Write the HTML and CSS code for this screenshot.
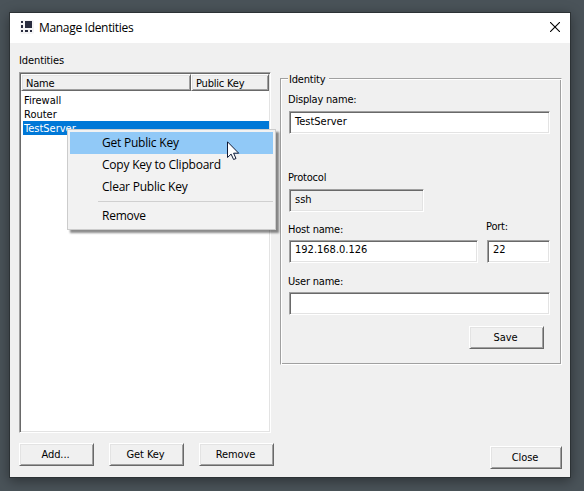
FILE: index.html
```html
<!DOCTYPE html>
<html lang="en">
<head>
<meta charset="utf-8">
<title>Manage Identities</title>
<link rel="stylesheet" href="styles.css">
</head>
<body>
<main class="dialog">
  <header class="titlebar">
    <svg class="app-icon" width="14" height="14" viewBox="0 0 14 14" aria-hidden="true">
      <rect x="0" y="0" width="14" height="14" rx="2" fill="#f4f4f5"/>
      <path fill="#292c3e" d="M5 1h7v7H5zM1 1h2v2H1zM1 5h2v3H1zM1 10h2v2H1zM5 10h3v2H5zM10 10h2v2h-2z"/>
    </svg>
    <h1>Manage Identities</h1>
    <svg class="close-icon" width="10" height="10" viewBox="0 0 10 10" aria-label="Close"><path d="M0 0L10 10M10 0L0 10" stroke="#000" stroke-width="1.1"/></svg>
  </header>
  <div class="content">
    <section class="left">
      <div class="label list-label">Identities</div>
      <div class="list sunken">
        <div class="list-head"><div class="head-cell name">Name</div><div class="head-cell key">Public Key</div></div>
        <div class="rows">
          <div class="row">Firewall</div>
          <div class="row">Router</div>
          <div class="row selected">TestServer</div>
        </div>
      </div>
      <div class="buttons">
        <button>Add...</button><button>Get Key</button><button>Remove</button>
      </div>
    </section>
    <section class="right">
      <div class="group">
        <div class="legend">Identity</div>
        <div class="label display-label">Display name:</div>
        <div class="field sunken">TestServer</div>
        <div class="label protocol-label">Protocol</div>
        <div class="field sunken readonly">ssh</div>
        <div class="pair">
          <div class="host"><div class="label">Host name:</div><div class="field sunken">192.168.0.126</div></div>
          <div class="port"><div class="label">Port:</div><div class="field sunken">22</div></div>
        </div>
        <div class="label user-label">User name:</div>
        <div class="field sunken"></div>
        <button class="save">Save</button>
      </div>
      <button class="close">Close</button>
    </section>
  </div>
</main>
<nav class="menu">
  <div class="item active">Get Public Key</div>
  <div class="item">Copy Key to Clipboard</div>
  <div class="item">Clear Public Key</div>
  <div class="separator"></div>
  <div class="item">Remove</div>
</nav>
<svg class="cursor" width="13" height="20" viewBox="0 0 13 20" aria-hidden="true"><path d="M.5.8v15.7l3.6-3.4 2.5 5.4 2.4-1-2.4-5.3h5.1z" fill="#fff" stroke="#101a35" stroke-width="1"/></svg>
</body>
</html>
```

FILE: styles.css
```css
* { box-sizing: border-box; }
body {
  margin: 0;
  width: 584px;
  height: 491px;
  padding: 12px 0 0 9px;
  overflow: hidden;
  position: relative;
  background: #4a5359;
  color: #000;
  font: 11px/16px "DejaVu Sans Condensed", "DejaVu Sans", sans-serif;
  font-stretch: condensed;
  letter-spacing: -0.2px;
  white-space: nowrap;
}
.dialog {
  width: 562px;
  height: 466px;
  border: 1px solid #2c3235;
  background: #f0f0f0;
  box-shadow: 0 3px 12px rgba(0, 0, 0, .4);
}
.titlebar {
  height: 30px;
  background: #fff;
  display: flex;
  align-items: center;
  padding: 0 10px;
}
.app-icon { margin-right: 5px; margin-top: -3px; }
h1 { margin: 0; font: 12px/18px "Open Sans", sans-serif; letter-spacing: -.32px; }
.close-icon { margin-left: auto; margin-top: -2px; }
.content { display: flex; height: 434px; }
.left { width: 270px; padding: 10px 0 0 9px; }
.label { height: 14px; margin-left: -1px; }
.list-label { margin: 0 0 5px; letter-spacing: -.1px; }
.sunken {
  border: 1px solid;
  border-color: #a0a0a0 #fff #fff #a0a0a0;
  box-shadow: inset 1px 1px #696969, inset -1px -1px #e3e3e3;
  background: #fff;
}
.list { width: 252px; height: 361px; padding: 1px; }
.list-head { display: flex; }
.head-cell, button {
  border: 1px solid;
  border-color: #fff #696969 #696969 #fff;
  box-shadow: inset 1px 1px #e3e3e3, inset -1px -1px #a0a0a0;
  background: #f0f0f0;
}
.head-cell { height: 17px; padding: 1px 4px; }
.name { width: 170px; }
.key { width: 78px; }
.rows { padding: 2px 0 0 2px; }
.row { height: 14px; padding-left: 1px; letter-spacing: 0; }
.selected { background: #0078d7; color: #fff; }
.buttons { display: flex; gap: 15px; margin-top: 10px; }
button {
  display: block;
  width: 75px;
  height: 23px;
  padding: 1px 2px 0 0;
  color: #000;
  font: inherit;
  letter-spacing: -.1px;
  border-radius: 0;
}
.right { width: 290px; padding-top: 35px; }
.group {
  width: 282px;
  height: 287px;
  border: 1px solid #a0a0a0;
  border-right-color: #fff;
  border-bottom-color: #fff;
  box-shadow: inset 1px 1px #fff, inset -1px -1px #a0a0a0;
  padding: 0 0 0 8px;
}
.legend { width: 41px; height: 14px; margin: -7px 0 0 -1px; padding-left: 1px; background: #f0f0f0; }
.display-label { margin-top: 6px; }
.field { height: 23px; width: 261px; padding: 2px 5px; letter-spacing: 0; }
.display-label + .field { margin-top: 5px; }
.protocol-label { margin-top: 36px; }
.group > .readonly { width: 135px; margin-top: 5px; background: #f0f0f0; }
.pair { display: flex; gap: 9px; align-items: flex-end; margin-top: 7px; }
.host { width: 189px; }
.host .field { width: 189px; margin-top: 4px; line-height: 14px; }
.port { width: 63px; }
.port .field { width: 63px; margin-top: 7px; line-height: 14px; }
.user-label { margin-top: 11px; margin-bottom: 4px; }
.save { margin: 11px 0 0 180px; }
.close { width: 72px; margin: 81px 0 0 210px; }
.menu {
  position: absolute;
  left: 67px;
  top: 129px;
  width: 209px;
  height: 101px;
  padding: 2px;
  border: 1px solid #ccc;
  background: #f2f2f2;
  box-shadow: 3px 3px 2px rgba(0, 0, 0, .45);
  font: 12px/22px "Open Sans", sans-serif;
  letter-spacing: -.22px;
}
.item { height: 22px; padding-left: 32px; }
.active { background: #91c9f7; }
.separator { height: 1px; margin: 3px 0 3px 28px; background: #d0d0d0; }
.cursor { position: absolute; left: 227px; top: 141px; }
```
